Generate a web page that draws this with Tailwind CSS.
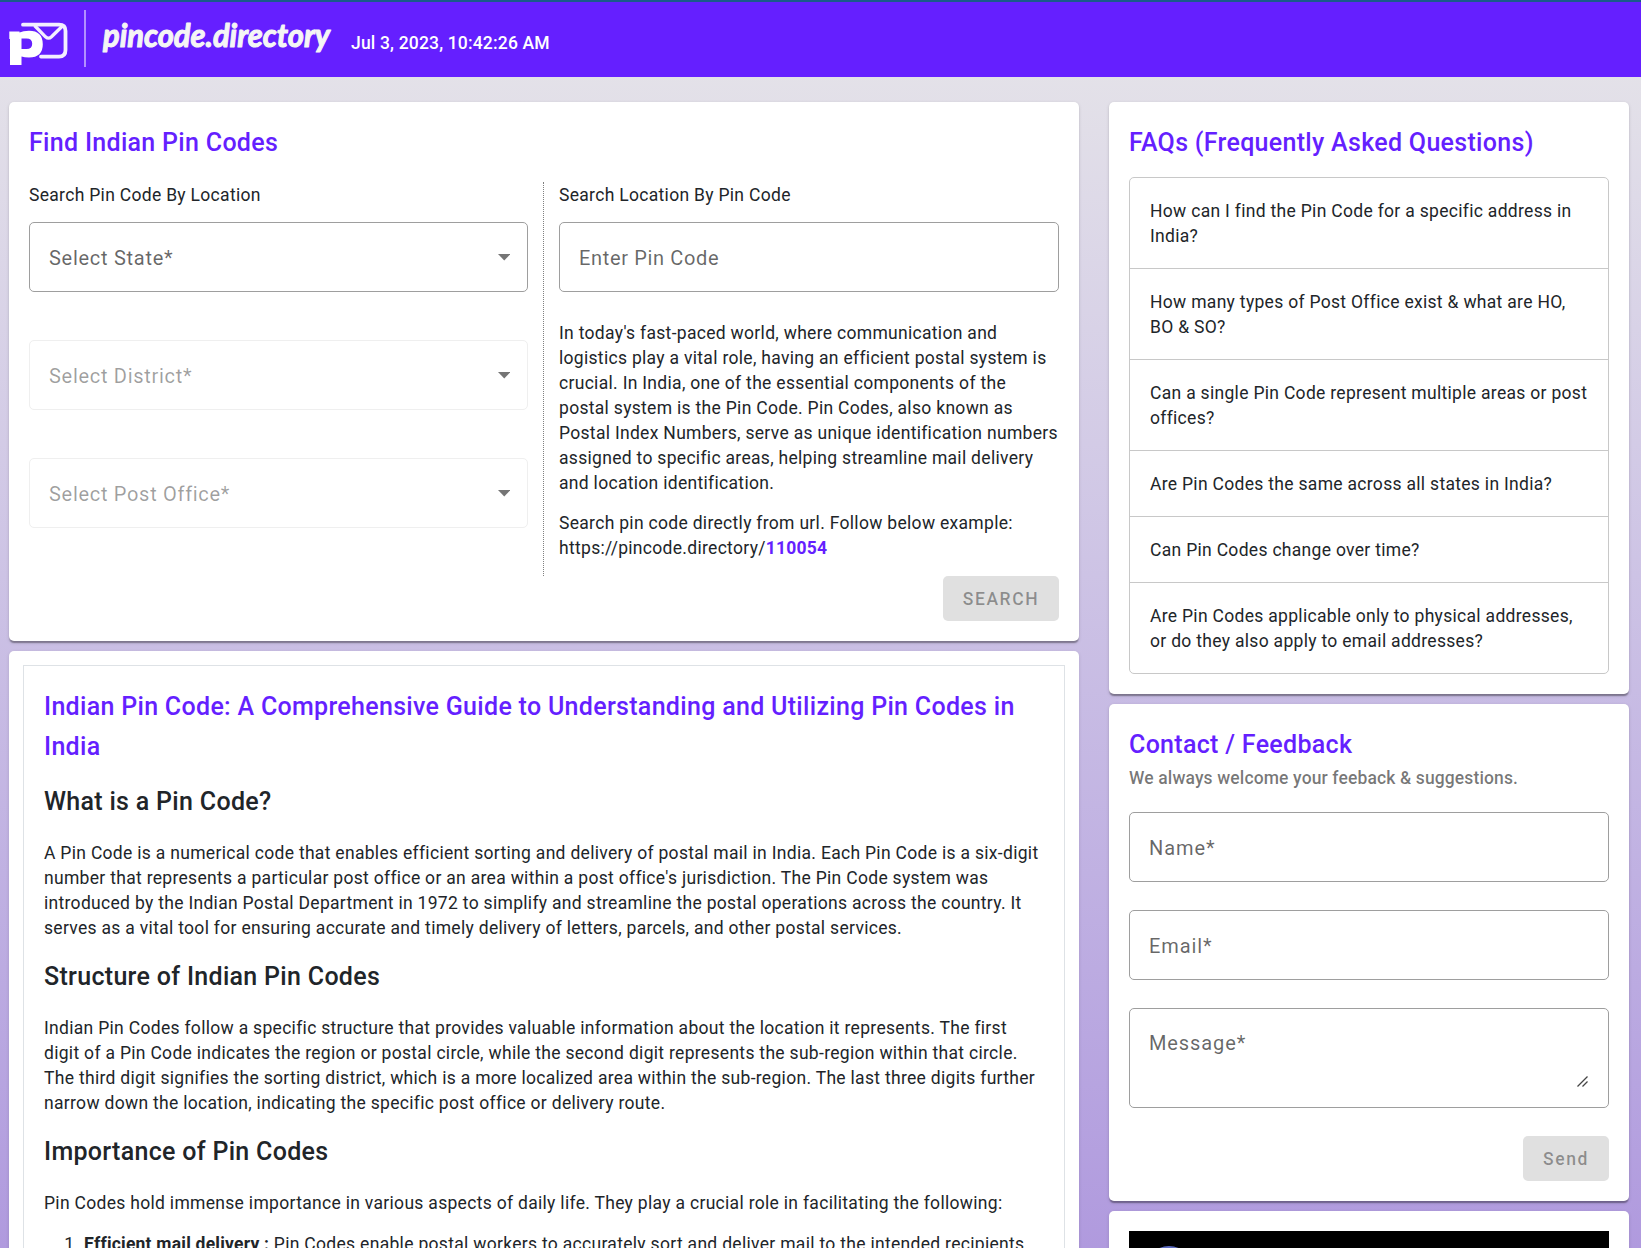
<!DOCTYPE html>
<html lang="en">
<head>
<meta charset="utf-8">
<title>pincode.directory</title>
<script src="https://cdn.jsdelivr.net/npm/@tailwindcss/browser@4"></script>
</head>
<body class="h-[1248px] overflow-hidden bg-linear-to-b from-[#e7e6e9] to-[#b09ade] font-['Roboto',sans-serif] text-[17.5px] leading-[25px] tracking-[0.305px] text-[#212529]">
<div class="h-[1248px] overflow-hidden">
<header class="flex h-[77px] items-start border-t-2 border-[#1a5a8a] bg-[#651fff] text-white">
  <svg class="mt-[18px] ml-[8px] h-[46px] w-[62px]" viewBox="8 20 62 46" fill="none">
    <path d="M23 24.7H59Q65.5 24.7 65.5 31V50Q65.5 56.6 59 56.6H41" stroke="#f3efff" stroke-width="3.8" stroke-linecap="round"/>
    <path d="M34.500 25.500L45.500 36.800Q48.500 39.500 51.500 36.800L62.500 26" stroke="#f3efff" stroke-width="3.3"/>
    <path fill="#fff" fill-rule="evenodd" d="M9.300 31.500H19.500V32.500Q23 30.700 29 30.700Q42.800 30.700 42.800 44.300Q42.800 57.500 29 57.500Q24.500 57.500 21.500 56.500V65H10V39H9.300ZM21.500 38.500V49H26.500Q32.200 49 32.200 43.800Q32.200 38.500 26.500 38.500Z"/>
  </svg>
  <div class="mt-2 ml-[14px] h-[57px] w-[2px] bg-white/50"></div>
  <svg class="ml-[10px] h-[70px] w-[246px] shrink-0 overflow-visible" viewBox="96 2 246 70">
    <text x="103" y="47.200" textLength="227" lengthAdjust="spacingAndGlyphs" class="fill-[#f5f5f5] font-['Lato',sans-serif] text-[33px] font-bold italic tracking-normal" stroke="#f5f5f5" stroke-width="1.100" stroke-linejoin="round">pincode.directory</text>
  </svg>
  <div class="mt-[29px] ml-[9px] text-[17.5px] font-medium tracking-[0.17px]">Jul 3, 2023, 10:42:26 AM</div>
</header>

<main class="flex items-start gap-[30px] pt-[25px] pl-[9px]">
  <div class="flex w-[1070px] flex-col gap-2.5">
    <section class="rounded-[5px] bg-white p-5 shadow-[0_2.5px_1.25px_-1.25px_rgba(0,0,0,0.2),0_1.25px_1.25px_rgba(0,0,0,0.14),0_1.25px_3.75px_rgba(0,0,0,0.12)]">
      <h1 class="h-10 text-[25px] leading-[42px] font-medium text-[#651fff]">Find Indian Pin Codes</h1>
      <div class="mt-5 flex h-[394px]">
        <div class="w-[499px]">
          <p class="mb-[15px] h-[25px] leading-[27px]">Search Pin Code By Location</p>
          <div class="flex flex-col gap-12 text-[20px]">
            <div class="flex h-[70px] items-center justify-between rounded-[5px] border border-[#9e9e9e] pr-[17px] pl-[19px] tracking-[0.72px] text-black/60"><span class="mt-[3px]">Select State*</span><svg class="h-[7px] w-[12.5px]" viewBox="0 0 12.500 7"><path fill="#757575" d="M0 0H12.500L6.250 6.500Z"/></svg></div>
            <div class="flex h-[70px] items-center justify-between rounded-[5px] border border-[#efefef] pr-[17px] pl-[19px] tracking-[0.7px] text-black/38"><span class="mt-[3px]">Select District*</span><svg class="h-[7px] w-[12.5px]" viewBox="0 0 12.500 7"><path fill="#757575" d="M0 0H12.500L6.250 6.500Z"/></svg></div>
            <div class="flex h-[70px] items-center justify-between rounded-[5px] border border-[#efefef] pr-[17px] pl-[19px] tracking-[0.7px] text-black/38"><span class="mt-[3px]">Select Post Office*</span><svg class="h-[7px] w-[12.5px]" viewBox="0 0 12.500 7"><path fill="#757575" d="M0 0H12.500L6.250 6.500Z"/></svg></div>
          </div>
        </div>
        <div class="ml-[15px] w-0 border-l border-dotted border-[#808080]"></div>
        <div class="ml-[15px] w-[500px]">
          <p class="mb-[15px] h-[25px] leading-[27px]">Search Location By Pin Code</p>
          <div class="flex h-[70px] items-center rounded-[5px] border border-[#9e9e9e] pl-[19px] text-[20px] tracking-[0.65px] text-black/60"><span class="mt-[3px]">Enter Pin Code</span></div>
          <p class="mt-[29px] whitespace-nowrap">In today's fast-paced world, where communication and<br>logistics play a vital role, having an efficient postal system is<br>crucial. In India, one of the essential components of the<br>postal system is the Pin Code. Pin Codes, also known as<br>Postal Index Numbers, serve as unique identification numbers<br>assigned to specific areas, helping streamline mail delivery<br>and location identification.</p>
          <p class="mt-[15px] whitespace-nowrap">Search pin code directly from url. Follow below example:<br>https://pincode.directory/<b class="font-bold tracking-[0.2px] text-[#651fff]">110054</b></p>
        </div>
      </div>
      <div class="flex justify-end"><button class="h-[45px] w-[116px] rounded-[5px] bg-[#e0e0e0] pt-[2px] text-[17.5px] font-medium tracking-[1.56px] text-black/38">SEARCH</button></div>
    </section>

    <section class="h-[700px] rounded-[5px] bg-white p-[14px] shadow-[0_1.25px_3.75px_rgba(0,0,0,0.12)]">
      <div class="h-[700px] border border-[#dee2e6] px-5 pt-[21px] whitespace-nowrap">
        <h1 class="text-[25px] leading-10 font-medium text-[#651fff]">Indian Pin Code: A Comprehensive Guide to Understanding and Utilizing Pin Codes in<br>India</h1>
        <h2 class="mt-[14px] mb-5 h-10 text-[25px] leading-[42px] font-medium">What is a Pin Code?</h2>
        <p>A Pin Code is a numerical code that enables efficient sorting and delivery of postal mail in India. Each Pin Code is a six-digit<br>number that represents a particular post office or an area within a post office's jurisdiction. The Pin Code system was<br>introduced by the Indian Postal Department in 1972 to simplify and streamline the postal operations across the country. It<br>serves as a vital tool for ensuring accurate and timely delivery of letters, parcels, and other postal services.</p>
        <h2 class="mt-[15px] mb-5 h-10 text-[25px] leading-[42px] font-medium">Structure of Indian Pin Codes</h2>
        <p>Indian Pin Codes follow a specific structure that provides valuable information about the location it represents. The first<br>digit of a Pin Code indicates the region or postal circle, while the second digit represents the sub-region within that circle.<br>The third digit signifies the sorting district, which is a more localized area within the sub-region. The last three digits further<br>narrow down the location, indicating the specific post office or delivery route.</p>
        <h2 class="mt-[15px] mb-5 h-10 text-[25px] leading-[42px] font-medium">Importance of Pin Codes</h2>
        <p>Pin Codes hold immense importance in various aspects of daily life. They play a crucial role in facilitating the following:</p>
        <ol class="mt-[16px] list-decimal pl-10">
          <li><b class="font-bold tracking-[0.22px]">Efficient mail delivery :</b> Pin Codes enable postal workers to accurately sort and deliver mail to the intended recipients</li>
        </ol>
      </div>
    </section>
  </div>

  <div class="flex w-[520px] flex-col gap-2.5">
    <section class="rounded-[5px] bg-white p-5 shadow-[0_2.5px_1.25px_-1.25px_rgba(0,0,0,0.2),0_1.25px_1.25px_rgba(0,0,0,0.14),0_1.25px_3.75px_rgba(0,0,0,0.12)]">
      <h1 class="mb-[15px] h-10 text-[25px] leading-[42px] font-medium text-[#651fff]">FAQs (Frequently Asked Questions)</h1>
      <ul class="divide-y divide-[#c8c8c8] rounded-[5px] border border-[#c8c8c8] whitespace-nowrap">
        <li class="px-5 pt-[21px] pb-[19px]">How can I find the Pin Code for a specific address in<br>India?</li>
        <li class="px-5 pt-[21px] pb-[19px]">How many types of Post Office exist &amp; what are HO,<br>BO &amp; SO?</li>
        <li class="px-5 pt-[21px] pb-[19px]">Can a single Pin Code represent multiple areas or post<br>offices?</li>
        <li class="px-5 pt-[21px] pb-[19px]">Are Pin Codes the same across all states in India?</li>
        <li class="px-5 pt-[21px] pb-[19px]">Can Pin Codes change over time?</li>
        <li class="px-5 pt-[21px] pb-[19px]">Are Pin Codes applicable only to physical addresses,<br>or do they also apply to email addresses?</li>
      </ul>
    </section>

    <section class="rounded-[5px] bg-white p-5 shadow-[0_2.5px_1.25px_-1.25px_rgba(0,0,0,0.2),0_1.25px_1.25px_rgba(0,0,0,0.14),0_1.25px_3.75px_rgba(0,0,0,0.12)]">
      <h1 class="h-10 text-[25px] leading-[42px] font-medium text-[#651fff]">Contact / Feedback</h1>
      <p class="h-7 leading-[28.5px] font-medium tracking-[0.125px] text-black/54">We always welcome your feeback &amp; suggestions.</p>
      <div class="mt-5 flex flex-col gap-7 text-[20px] tracking-[0.9px] text-black/60">
        <div class="flex h-[70px] items-center rounded-[5px] border border-[#9e9e9e] pl-[19px]"><span class="mt-[2px]">Name*</span></div>
        <div class="flex h-[70px] items-center rounded-[5px] border border-[#9e9e9e] pl-[19px]"><span class="mt-[2px]">Email*</span></div>
        <div class="flex h-[100px] items-start justify-between rounded-[5px] border border-[#9e9e9e] pt-[22px] pr-5 pl-[19px]"><span>Message*</span>
          <svg class="mt-[45px] h-[11px] w-[11px]" viewBox="0 0 11 11" stroke="#444" stroke-width="1.300"><path d="M.5 10.500L10.500 .5M5.500 10.500L10.500 5.500"/></svg></div>
      </div>
      <div class="mt-7 flex justify-end"><button class="h-[45px] w-[86px] rounded-[5px] bg-[#e0e0e0] pt-[1px] text-[17.5px] font-medium tracking-[1.56px] text-black/38">Send</button></div>
    </section>

    <section class="rounded-[5px] bg-white p-5 shadow-[0_1.25px_3.75px_rgba(0,0,0,0.12)]">
      <div class="h-[270px] bg-black pt-[15px] pl-[15px]"><div class="size-[50px] rounded-full bg-[#5c6bc0]"></div></div>
    </section>
  </div>
</main>
</div>
</body>
</html>
